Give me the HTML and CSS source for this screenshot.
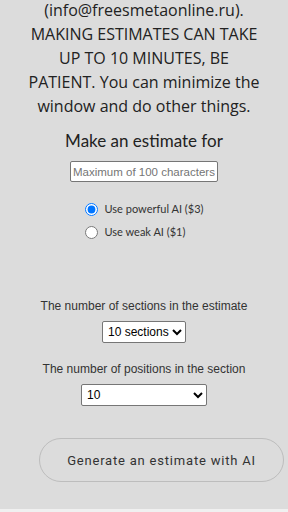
FILE: index.html
```html
<!DOCTYPE html>
<html lang="en">
<head>
    <meta charset="UTF-8">
    <meta name="viewport" content="width=device-width, initial-scale=1.0">
    <title>Estimate with AI</title>
    <link rel="stylesheet" href="styles.css">
</head>
<body>
    <div class="page">
        <p class="notice">(info@freesmetaonline.ru). MAKING ESTIMATES CAN TAKE UP TO 10 MINUTES, BE PATIENT. You can minimize the window and do other things.</p>

        <h2 class="form-title">Make an estimate for</h2>
        <input class="subject-input" type="text" placeholder="Maximum of 100 characters">

        <div class="ai-options">
            <label class="ai-option"><input type="radio" name="ai" checked> Use powerful AI ($3)</label>
            <label class="ai-option"><input type="radio" name="ai"> Use weak AI ($1)</label>
        </div>

        <div class="field field-sections">
            <div class="field-label">The number of sections in the estimate</div>
            <select class="sections-select">
                <option>10 sections</option>
            </select>
        </div>

        <div class="field field-positions">
            <div class="field-label">The number of positions in the section</div>
            <select class="positions-select">
                <option>10</option>
            </select>
        </div>

        <button class="generate-btn">Generate an estimate with AI</button>
    </div>
</body>
</html>
```

FILE: styles.css
```css
body { margin: 0; background-color: #f0f0f0; font-family: "Open Sans", sans-serif; color: #222; }
.page { background-color: #dcdcdc; height: 509px; overflow: hidden; display: flex; flex-direction: column; align-items: center; }
.notice { margin: -2px 0 0; width: 231px; font-size: 16px; line-height: 24px; text-align: center; }
.form-title { margin: 10px 0 0; font-family: Lato, sans-serif; font-size: 17px; font-weight: normal; line-height: 26px; }
.subject-input {
    margin-top: 7px;
    width: 148px;
    height: 21px;
    box-sizing: border-box;
    padding: 0 2px;
    border: 1px solid #767676;
    border-radius: 2px;
    font-family: "Liberation Sans", Arial, sans-serif;
    font-size: 11.5px;
    background: #fff;
}
.subject-input::placeholder { color: #757575; }
.ai-options { margin-top: 18px; display: flex; flex-direction: column; gap: 5px; }
.ai-option { display: flex; align-items: center; font-family: Lato, sans-serif; font-size: 11px; line-height: 18px; color: #333; }
.ai-option input { margin: 0 7px 0 0; width: 13px; height: 13px; }
.field { display: flex; flex-direction: column; align-items: center; }
.field-sections { margin-top: 57px; }
.field-positions { margin-top: 18px; }
.field-label { font-family: "Liberation Sans", Arial, sans-serif; font-size: 12px; line-height: 16px; color: #333; }
select {
    margin-top: 7px;
    height: 22px;
    padding: 0 0 0 1px;
    border: 1px solid #767676;
    border-radius: 2px;
    background: #fff;
    font-family: "Liberation Sans", Arial, sans-serif;
    font-size: 12px;
    color: #000;
}
.positions-select { width: 126px; }
.generate-btn {
    margin: 32px 0 0 35px;
    width: 245px;
    height: 44px;
    flex-shrink: 0;
    border: 1px solid #bdbdbd;
    border-radius: 22px;
    background: transparent;
    font-family: Roboto, sans-serif;
    font-size: 13px;
    letter-spacing: 0.8px;
    color: #333;
    cursor: pointer;
}
```
